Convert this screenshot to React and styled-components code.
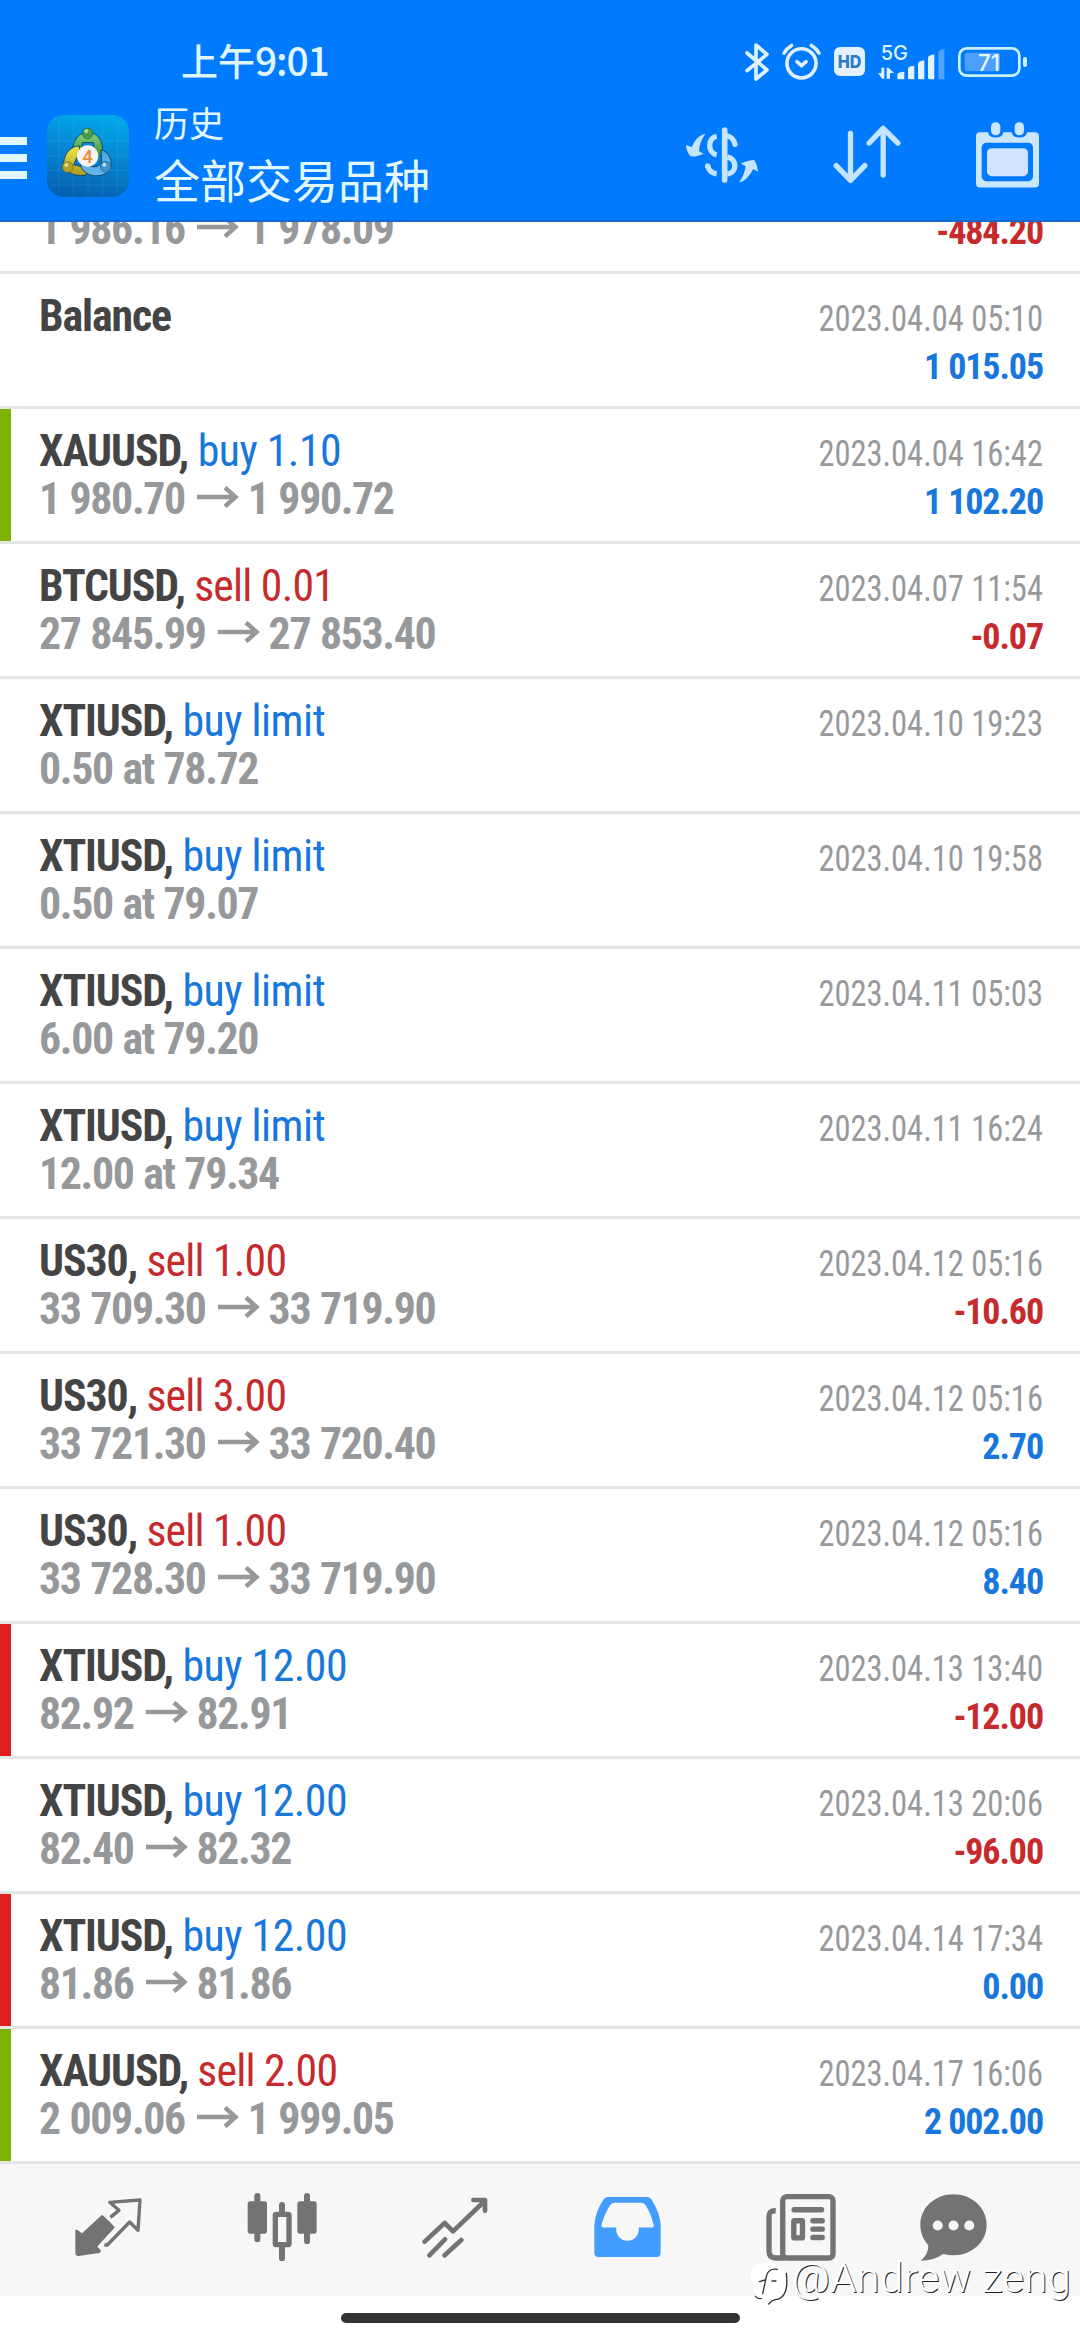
import React from 'react';
import styled, { createGlobalStyle } from 'styled-components';

const BLUE = '#1777dc';
const RED = '#c62a2d';

// 1. DATA: history rows, from the oldest to the newest
const deals = [
  { id: 1, from: '1 986.16', to: '1 978.09', profit: '-484.20' },
  { id: 2, symbol: 'Balance', time: '2023.04.04 05:10', profit: '1 015.05' },
  { id: 3, symbol: 'XAUUSD,', side: 'buy', volume: '1.10', from: '1 980.70', to: '1 990.72', time: '2023.04.04 16:42', profit: '1 102.20', mark: '#7db104' },
  { id: 4, symbol: 'BTCUSD,', side: 'sell', volume: '0.01', from: '27 845.99', to: '27 853.40', time: '2023.04.07 11:54', profit: '-0.07' },
  { id: 5, symbol: 'XTIUSD,', side: 'buy', volume: 'limit', note: '0.50 at 78.72', time: '2023.04.10 19:23' },
  { id: 6, symbol: 'XTIUSD,', side: 'buy', volume: 'limit', note: '0.50 at 79.07', time: '2023.04.10 19:58' },
  { id: 7, symbol: 'XTIUSD,', side: 'buy', volume: 'limit', note: '6.00 at 79.20', time: '2023.04.11 05:03' },
  { id: 8, symbol: 'XTIUSD,', side: 'buy', volume: 'limit', note: '12.00 at 79.34', time: '2023.04.11 16:24' },
  { id: 9, symbol: 'US30,', side: 'sell', volume: '1.00', from: '33 709.30', to: '33 719.90', time: '2023.04.12 05:16', profit: '-10.60' },
  { id: 10, symbol: 'US30,', side: 'sell', volume: '3.00', from: '33 721.30', to: '33 720.40', time: '2023.04.12 05:16', profit: '2.70' },
  { id: 11, symbol: 'US30,', side: 'sell', volume: '1.00', from: '33 728.30', to: '33 719.90', time: '2023.04.12 05:16', profit: '8.40' },
  { id: 12, symbol: 'XTIUSD,', side: 'buy', volume: '12.00', from: '82.92', to: '82.91', time: '2023.04.13 13:40', profit: '-12.00', mark: '#e01f1f' },
  { id: 13, symbol: 'XTIUSD,', side: 'buy', volume: '12.00', from: '82.40', to: '82.32', time: '2023.04.13 20:06', profit: '-96.00' },
  { id: 14, symbol: 'XTIUSD,', side: 'buy', volume: '12.00', from: '81.86', to: '81.86', time: '2023.04.14 17:34', profit: '0.00', mark: '#e01f1f' },
  { id: 15, symbol: 'XAUUSD,', side: 'sell', volume: '2.00', from: '2 009.06', to: '1 999.05', time: '2023.04.17 16:06', profit: '2 002.00', mark: '#7db104' },
];

// 2. STYLES
const GlobalStyle = createGlobalStyle`
  body {
    margin: 0;
    background: #fff;
  }
`;

const Screen = styled.div`
  position: relative;
  display: flex;
  flex-direction: column;
  width: 1080px;
  height: 2340px;
  overflow: hidden;
  background: #fff;
  font-family: 'Roboto Condensed', Roboto, 'Noto Sans CJK SC', sans-serif;
`;

const Header = styled.header`
  box-sizing: border-box;
  flex: none;
  height: 222px;
  background: #007aff;
  border-bottom: 2px solid #1769cd;
`;

const StatusBar = styled.div`
  display: flex;
  align-items: center;
  box-sizing: border-box;
  height: 92px;
  padding: 31px 53px 0 181px;
`;

const Clock = styled.span`
  margin: -4px auto 0 0;
  color: #dff5ff;
  font: 500 37px/60px 'Noto Sans CJK SC', sans-serif;
  white-space: nowrap;

  b {
    font-size: 39px;
    font-weight: 500;
    letter-spacing: -1.2px;
  }
`;

const StatusIcons = styled.div`
  display: flex;
  align-items: center;
  gap: 13px;

  svg {
    overflow: visible;
  }
`;

const Toolbar = styled.div`
  display: flex;
  align-items: center;
  height: 128px;
  padding-right: 41px;
`;

const MenuButton = styled.div`
  display: flex;
  flex-direction: column;
  gap: 9px;
  margin: 3px 20px 0 0;

  span {
    width: 27px;
    height: 8px;
    background: #e2f8ff;
  }
`;

const Titles = styled.div`
  display: flex;
  flex-direction: column;
  gap: 8px;
  margin: -4px auto 0 25px;
  color: #e2f8ff;
  font-family: 'Noto Sans CJK SC', sans-serif;
`;

const Title = styled.div`
  font-size: 35px;
  line-height: 40px;
`;

const Subtitle = styled.div`
  font-size: 46px;
  line-height: 56px;
`;

const Actions = styled.div`
  display: flex;
  align-items: center;
  gap: 75px;
  margin-top: -3px;
`;

const List = styled.main`
  display: flex;
  flex-direction: column;
  justify-content: flex-end;
  flex: none;
  height: 1942px;
  overflow: hidden;
`;

const Row = styled.div`
  flex: none;
  box-sizing: border-box;
  height: 135px;
  padding: 18px 37px 0 27px;
  border-bottom: 3px solid #e4e4e4;
  box-shadow: inset 11px 0 0 ${props => props.$mark || 'transparent'};
`;

const Line = styled.div`
  display: flex;
  align-items: baseline;
  height: 48px;
  padding-left: 12px;
  font-size: 43.8px;
  line-height: 48px;
  white-space: nowrap;

  /* keeps the baseline when the left side is empty */
  &::before {
    content: '\\200b';
  }
`;

const Deal = styled.span`
  letter-spacing: ${props => (props.$side === 'sell' ? -0.8 : -0.5)}px;
  color: ${props => (props.$side === 'sell' ? RED : BLUE)};

  b {
    color: #444;
    letter-spacing: -1.1px;
  }
`;

const Price = styled.span`
  font-weight: 700;
  letter-spacing: -1.35px;
  word-spacing: 1px;
  color: #97989a;

  svg {
    margin: 0 9px 6px 12px;
  }
`;

const Time = styled.span`
  margin-left: auto;
  font-size: 36px;
  color: #98999b;
  transform: scaleX(0.902);
  transform-origin: right;
`;

const Profit = styled.span`
  margin-left: auto;
  font-size: 36px;
  font-weight: 700;
  letter-spacing: -1.1px;
  color: ${props => (props.$loss ? RED : BLUE)};
`;

const TabBar = styled.nav`
  display: flex;
  flex: none;
  box-sizing: border-box;
  height: 132px;
  padding: 0 0 6px 22px;
  background: #f7f7f7;
`;

const Tab = styled.div`
  display: flex;
  align-items: center;
  justify-content: center;
  width: ${props => (props.$last ? 132 : 173)}px;
`;

const HomeBar = styled.div`
  width: 399px;
  height: 10px;
  margin: 17px auto 0;
  border-radius: 5px;
  background: #333;
`;

const Watermark = styled.div`
  position: absolute;
  left: 750px;
  top: 2251px;
  display: flex;
  align-items: center;
  gap: 3px;
  color: #fff;
  font: 300 41.5px/50px Roboto, sans-serif;
  letter-spacing: 0.5px;
  white-space: nowrap;
  text-shadow: 1px 1px 0 #222;

  svg {
    margin-top: 10px;
  }
`;

// 3. ICONS
const Bluetooth = () => (
  <svg width="24" height="38" viewBox="192 38 72 114" fill="none" stroke="#dff3ff" strokeWidth="11" strokeLinecap="round" strokeLinejoin="round">
    <path d="M198 68 L258 119 L225 146 V44 L258 72 L198 121" />
  </svg>
);

const Alarm = () => (
  <svg width="39" height="37" viewBox="308 40 118 111" fill="none" stroke="#dff0ff" strokeWidth="11" strokeLinecap="round">
    <circle cx="367" cy="101" r="44" />
    <path d="M353 96 L367 108 L381 96" />
    <path d="M314 70 Q322 56 337 47 M420 70 Q412 56 397 47" />
  </svg>
);

const Hd = () => (
  <svg width="31" height="29" viewBox="464 53 92 86">
    <rect x="464" y="53" width="92" height="86" rx="18" fill="#e2f0ff" />
    <text x="510" y="114" textAnchor="middle" fontFamily="Inter, sans-serif" fontSize="50" fontWeight="800" textLength="70" lengthAdjust="spacingAndGlyphs" fill="#2f78c8">HD</text>
  </svg>
);

const Signal = () => (
  <svg width="67" height="36" viewBox="592 37 201 108" fill="#dff3ff">
    <text x="600" y="84" fontFamily="Inter, sans-serif" fontSize="61" fontWeight="500" textLength="82" lengthAdjust="spacingAndGlyphs">5G</text>
    <path d="M602 108 H611 V141 H605 L592 125 H602 Z M618 108 H624 L640 124 H628 V141 H618 Z" />
    <path d="M650 128 Q652 121 671 120 V143 H654 Q650 143 650 139 Z" />
    <path d="M682 110 Q684 103 701 102 V143 H686 Q682 143 682 139 Z" />
    <path d="M712 95 Q714 88 731 86 V143 H716 Q712 143 712 139 Z" />
    <path d="M742 78 Q744 70 761 68 V143 H746 Q742 143 742 139 Z" />
    <path opacity=".35" d="M773 62 Q775 54 791 52 V143 H777 Q773 143 773 139 Z" />
  </svg>
);

const Battery = () => (
  <svg width="69" height="30" viewBox="834 51 207 90">
    <rect x="838" y="55" width="180" height="82" rx="22" fill="none" stroke="#c8f2ff" strokeWidth="8" />
    <rect x="854" y="68" width="106" height="56" rx="8" fill="#4a9fff" />
    <rect x="1029" y="81" width="12" height="30" rx="6" fill="#c8f2ff" />
    <text x="927" y="122" textAnchor="middle" fontFamily="Inter, sans-serif" fontSize="70" fontWeight="500" textLength="66" lengthAdjust="spacingAndGlyphs" fill="#e8f8ff">71</text>
  </svg>
);

const AppLogo = () => (
  <svg width="82" height="82" viewBox="52 45 246 246">
    <defs>
      <linearGradient id="tile" x1="0.6" y1="0" x2="0.4" y2="1">
        <stop offset="0" stopColor="#00a8ea" />
        <stop offset=".5" stopColor="#0784cf" />
        <stop offset="1" stopColor="#0560b0" />
      </linearGradient>
      <linearGradient id="green" x1="0" y1="0" x2="0" y2="1">
        <stop offset="0" stopColor="#86cf7c" />
        <stop offset="1" stopColor="#2c8a34" />
      </linearGradient>
      <linearGradient id="yellow" x1="0" y1="0" x2="0" y2="1">
        <stop offset="0" stopColor="#f0e64c" />
        <stop offset="1" stopColor="#a99c1c" />
      </linearGradient>
      <linearGradient id="sky" x1="0" y1="0" x2="0" y2="1">
        <stop offset="0" stopColor="#4aa5dc" />
        <stop offset="1" stopColor="#69b7ea" />
      </linearGradient>
    </defs>
    <rect x="52" y="45" width="246" height="246" rx="50" fill="url(#tile)" />
    <path d="M131 46 V290 M175 46 V290 M219 46 V290 M263 60 V278 M88 60 V278 M53 122 H297 M53 167 H297 M53 211 H297 M62 255 H290" stroke="#5cc4f0" strokeOpacity=".25" strokeWidth="2" />
    <g stroke="#12476b" strokeWidth="3" strokeLinejoin="round">
      <path d="M128 160 C128 120 148 97 175 97 C203 97 222 122 218 158 L196 182 L192 128 H158 L152 168 Z" fill="url(#green)" />
      <path d="M150 138 C124 138 104 158 102 190 C104 215 130 230 166 226 L186 210 L164 202 L132 194 L148 160 Z" fill="url(#yellow)" />
      <path d="M214 150 C236 154 246 176 244 198 C240 222 208 234 180 224 C162 216 154 206 152 192 L170 186 C182 206 204 204 216 188 Z" fill="url(#sky)" />
    </g>
    <circle cx="174" cy="100" r="16" fill="#49a04c" stroke="#1d6634" strokeWidth="2" />
    <circle cx="170" cy="93" r="6" fill="#a9dfa2" />
    <circle cx="114" cy="201" r="16" fill="#b3a429" stroke="#6f6612" strokeWidth="2" />
    <circle cx="110" cy="195" r="6" fill="#e6dc7e" />
    <circle cx="228" cy="200" r="16" fill="#3f92cc" stroke="#1a5f94" strokeWidth="2" />
    <circle cx="224" cy="194" r="6" fill="#b4def6" />
    <circle cx="174" cy="168" r="32" fill="#f6f3f3" />
    <text x="174" y="188" textAnchor="middle" fontFamily="Roboto, sans-serif" fontSize="56" fontWeight="500" fill="#f08a34">4</text>
  </svg>
);

const CurrencyIcon = () => (
  <svg width="72" height="56" viewBox="18 289 216 168" fill="none" stroke="#c4e4ff" strokeWidth="16">
    <path d="M134 298 V448" strokeWidth="17" strokeLinecap="round" />
    <path d="M110 317 C82 322 82 366 110 373" />
    <path d="M142 316 Q160 320 165 341" strokeLinecap="round" />
    <path d="M142 379 C172 384 172 426 142 430" />
    <path d="M83 406 Q88 426 110 430" />
    <circle cx="83" cy="406" r="8" fill="#c4e4ff" stroke="none" />
    <path d="M76 309 Q50 314 35 349 Q27 346 18 343 Q19 364 32 377 Q45 380 71 369 Q64 366 57 361 Q58 336 76 309 Z" fill="#c4e4ff" stroke="none" />
    <path d="M177 456 Q200 452 220 415 Q228 420 234 423 Q232 400 222 388 Q204 388 183 399 Q190 403 197 407 Q194 432 177 456 Z" fill="#c4e4ff" stroke="none" />
  </svg>
);

const SortIcon = () => (
  <svg width="68" height="59" viewBox="454 289 203 177" fill="none" stroke="#c4e4ff" strokeWidth="16" strokeLinecap="round" strokeLinejoin="round">
    <path d="M506 314 V455 M463 411 L506 455 L549 411" />
    <path d="M604 439 V299 M562 343 L604 299 L648 343" />
  </svg>
);

const CalendarIcon = () => (
  <svg width="63" height="66" viewBox="889 277 189 197">
    <rect x="889" y="307" width="189" height="166" rx="12" fill="#cce6ff" />
    <rect x="925" y="270" width="46" height="53" rx="18" fill="#007aff" />
    <rect x="996" y="270" width="46" height="53" rx="18" fill="#007aff" />
    <rect x="934" y="277" width="28" height="39" rx="13" fill="#cce6ff" />
    <rect x="1005" y="277" width="28" height="39" rx="13" fill="#cce6ff" />
    <rect x="906" y="339" width="154" height="115" rx="14" fill="#007aff" />
    <rect x="922" y="355" width="123" height="84" rx="14" fill="#d0e3ff" />
  </svg>
);

const PriceArrow = () => (
  <svg width="42" height="22" viewBox="0 0 42 22" fill="none" stroke="#97989a" strokeWidth="4.4">
    <path d="M0 11 H38 M28 1.5 L38.5 11 L28 20.5" />
  </svg>
);

const QuotesIcon = () => (
  <svg width="67" height="58" viewBox="46 58 201 174" fill="none" stroke="#737373" strokeWidth="10" strokeLinejoin="round">
    <path d="M127 111 Q130 111 163 146 L110 204 L120 214 Q124 219 118 221 L57 230 Q49 230 49 224 V154 Q58 158 67 167 Z" fill="#737373" strokeWidth="4" />
    <path d="M152 116 L178 95 L150 71 L241 64 L235 155 L210 130 L143 199 H134" />
  </svg>
);

const ChartIcon = () => (
  <svg width="70" height="68" viewBox="558 41 210 204" fill="#737373">
    <rect x="560" y="66" width="58" height="97" rx="8" />
    <rect x="580" y="41" width="18" height="148" rx="9" />
    <rect x="709" y="66" width="58" height="97" rx="8" />
    <rect x="729" y="41" width="18" height="154" rx="9" />
    <rect x="654" y="68" width="18" height="40" rx="9" />
    <rect x="654" y="190" width="18" height="56" rx="9" />
    <rect x="643" y="105" width="41" height="91" rx="3" fill="#f7f7f7" stroke="#737373" strokeWidth="16" />
  </svg>
);

const TradeIcon = () => (
  <svg width="66" height="61" viewBox="1084 50 198 183" fill="none" stroke="#737373" strokeWidth="14" strokeLinecap="round" strokeLinejoin="round">
    <path d="M1092 184 L1152 128 L1177 153 L1272 62" />
    <path d="M1238 59 H1273 V91" />
    <path d="M1106 225 L1153 177 M1152 225 L1202 179" />
  </svg>
);

const HistoryIcon = () => (
  <svg width="67" height="60" viewBox="0 0 200 181">
    <path fill="#439dff" fillRule="evenodd" d="M40 0 H160 Q168 0 173 8 Q198 48 200 84 V168 Q200 181 187 181 H13 Q0 181 0 168 V84 Q3 44 27 8 Q32 0 40 0 Z M62 17 Q52 17 48 24 Q32 48 22 82 Q20 92 28 92 H66 V98 A34 34 0 0 0 134 98 V92 H172 Q181 92 179 84 Q170 48 154 24 Q150 17 140 17 Z" />
  </svg>
);

const NewsIcon = () => (
  <svg width="70" height="67" viewBox="79 41 209 200" fill="none" stroke="#737373" strokeWidth="16">
    <rect x="129" y="49" width="150" height="183" rx="12" />
    <path d="M108 91 Q88 90 88 107 V212 Q88 232 108 232 H135" />
    <path d="M163 88 H245 M219 121 H247 M219 146 H247 M219 171 H247" strokeLinecap="round" />
    <rect x="162" y="121" width="26" height="51" rx="2" />
  </svg>
);

const ChatIcon = () => (
  <svg width="67" height="67" viewBox="539 41 200 200">
    <path fill="#737373" d="M639 42 C694 42 738 82 738 133 C738 184 694 224 639 224 Q624 224 608 220 Q580 240 541 240 Q564 222 564 194 C548 178 540 156 540 133 C540 82 584 42 639 42 Z" />
    <g fill="#f7f7f7">
      <circle cx="592" cy="135" r="15" />
      <circle cx="639" cy="135" r="15" />
      <circle cx="686" cy="135" r="15" />
    </g>
  </svg>
);

const WatermarkLogo = () => (
  <svg width="39" height="44" viewBox="28 238 117 132" fill="none" strokeLinecap="round">
    <path d="M30 280 Q32 244 84 243 Q140 244 140 300 Q138 348 100 354 L84 368 L76 354 Q32 350 30 280 Z" fill="#fff" />
    <path d="M137 275 Q146 350 103 354 Q92 357 84 367 M44 344 Q52 353 62 350" stroke="#333" strokeWidth="4" />
    <path d="M110 263 Q80 258 76 290 L66 336 M56 300 L72 295 M94 298 H106" stroke="#333" strokeWidth="4" />
  </svg>
);

const tabs = [QuotesIcon, ChartIcon, TradeIcon, HistoryIcon, NewsIcon, ChatIcon];

// 4. ONE HISTORY ROW
const DealRow = ({ symbol, side, volume, from, to, note, time, profit, mark }) => (
  <Row $mark={mark}>
    <Line>
      <Deal $side={side}>
        <b>{symbol}</b>
        {side && ` ${side} ${volume}`}
      </Deal>
      <Time>{time}</Time>
    </Line>
    <Line>
      {from && <Price>{from}<PriceArrow />{to}</Price>}
      {note && <Price>{note}</Price>}
      {profit && <Profit $loss={profit.startsWith('-')}>{profit}</Profit>}
    </Line>
  </Row>
);

const App = () => {
  return (
    <Screen>
      <GlobalStyle />
      <Header>
        <StatusBar>
          <Clock>上午<b>9:01</b></Clock>
          <StatusIcons>
            <Bluetooth />
            <Alarm />
            <Hd />
            <Signal />
            <Battery />
          </StatusIcons>
        </StatusBar>
        <Toolbar>
          <MenuButton>
            <span />
            <span />
            <span />
          </MenuButton>
          <AppLogo />
          <Titles>
            <Title>历史</Title>
            <Subtitle>全部交易品种</Subtitle>
          </Titles>
          <Actions>
            <CurrencyIcon />
            <SortIcon />
            <CalendarIcon />
          </Actions>
        </Toolbar>
      </Header>
      <List>
        {deals.map((deal) => (
          <DealRow key={deal.id} {...deal} />
        ))}
      </List>
      <TabBar>
        {tabs.map((Icon, i) => (
          <Tab key={i} $last={i === tabs.length - 1}>
            <Icon />
          </Tab>
        ))}
      </TabBar>
      <HomeBar />
      <Watermark>
        <WatermarkLogo />
        @Andrew zeng
      </Watermark>
    </Screen>
  );
};

export default App;
